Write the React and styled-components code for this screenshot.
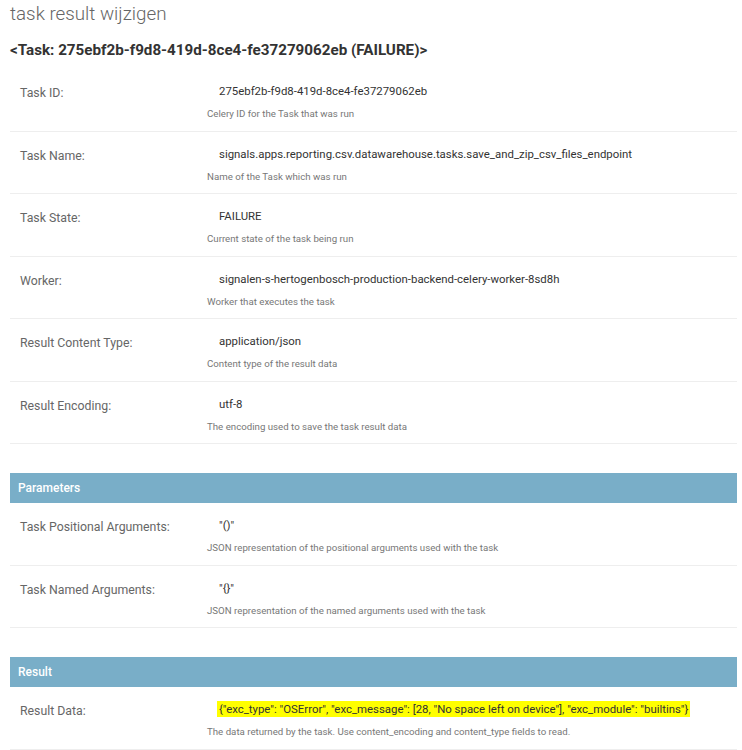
import React from "react";
import styled, { createGlobalStyle } from "styled-components";

const Global = createGlobalStyle`
  html, body { margin: 0; padding: 0; background: #fff; }
  body { font-family: Roboto, "Liberation Sans", Arial, sans-serif; color: #333; }
`;

const Page = styled.div`
  padding: 0 5px 0 10px;
`;

const Title = styled.h1`
  margin: 0;
  padding-top: 2px;
  font-size: 18.8px;
  line-height: 24px;
  font-weight: 300;
  color: #666;
`;

const ObjectName = styled.h2`
  margin: 14px 0 9px;
  font-size: 15.2px;
  line-height: 20px;
  font-weight: 700;
  color: #333;
`;

const Fieldset = styled.section`
  margin: 0 0 29px;
`;

const Header = styled.h3`
  margin: 0;
  padding: 0 8px;
  height: 30px;
  display: flex;
  align-items: center;
  background: #79aec8;
  color: #fff;
  font-size: 12px;
  font-weight: 500;
`;

const Row = styled.div`
  display: flex;
  padding: 10px 10px 10.5px;
  border-bottom: 1px solid #eee;
`;

const Label = styled.div`
  width: 187px;
  flex: none;
  padding-top: 6px;
  font-size: 12.3px;
  line-height: 16px;
  color: #666;
`;

const Field = styled.div`
  flex: 1;
  min-width: 0;
`;

const Value = styled.div`
  padding: 4px 12px;
  font-size: 11.4px;
  line-height: 16px;
  color: #333;
  white-space: nowrap;
`;

const Highlight = styled.span`
  background: #ffff00;
  margin-left: -2px;
  padding: 1px 2px;
`;

const Help = styled.div`
  margin-top: 4px;
  font-size: 9.7px;
  line-height: 13px;
  color: #777;
  white-space: nowrap;
`;

const general = [
  ["Task ID:", "275ebf2b-f9d8-419d-8ce4-fe37279062eb", "Celery ID for the Task that was run"],
  ["Task Name:", "signals.apps.reporting.csv.datawarehouse.tasks.save_and_zip_csv_files_endpoint", "Name of the Task which was run"],
  ["Task State:", "FAILURE", "Current state of the task being run"],
  ["Worker:", "signalen-s-hertogenbosch-production-backend-celery-worker-8sd8h", "Worker that executes the task"],
  ["Result Content Type:", "application/json", "Content type of the result data"],
  ["Result Encoding:", "utf-8", "The encoding used to save the task result data"],
];

const params = [
  ["Task Positional Arguments:", "\"()\"", "JSON representation of the positional arguments used with the task"],
  ["Task Named Arguments:", "\"{}\"", "JSON representation of the named arguments used with the task"],
];

function FieldRow({ label, value, help, highlight }) {
  return (
    <Row>
      <Label>{label}</Label>
      <Field>
        <Value>{highlight ? <Highlight>{value}</Highlight> : value}</Value>
        <Help>{help}</Help>
      </Field>
    </Row>
  );
}

export default function App() {
  return (
    <>
      <Global />
      <Page>
        <Title>task result wijzigen</Title>
        <ObjectName>&lt;Task: 275ebf2b-f9d8-419d-8ce4-fe37279062eb (FAILURE)&gt;</ObjectName>
        <Fieldset>
          {general.map(([l, v, h]) => (
            <FieldRow key={l} label={l} value={v} help={h} />
          ))}
        </Fieldset>
        <Fieldset>
          <Header>Parameters</Header>
          {params.map(([l, v, h]) => (
            <FieldRow key={l} label={l} value={v} help={h} />
          ))}
        </Fieldset>
        <Fieldset>
          <Header>Result</Header>
          <FieldRow
            label="Result Data:"
            value={'{"exc_type": "OSError", "exc_message": [28, "No space left on device"], "exc_module": "builtins"}'}
            help="The data returned by the task. Use content_encoding and content_type fields to read."
            highlight
          />
        </Fieldset>
      </Page>
    </>
  );
}
